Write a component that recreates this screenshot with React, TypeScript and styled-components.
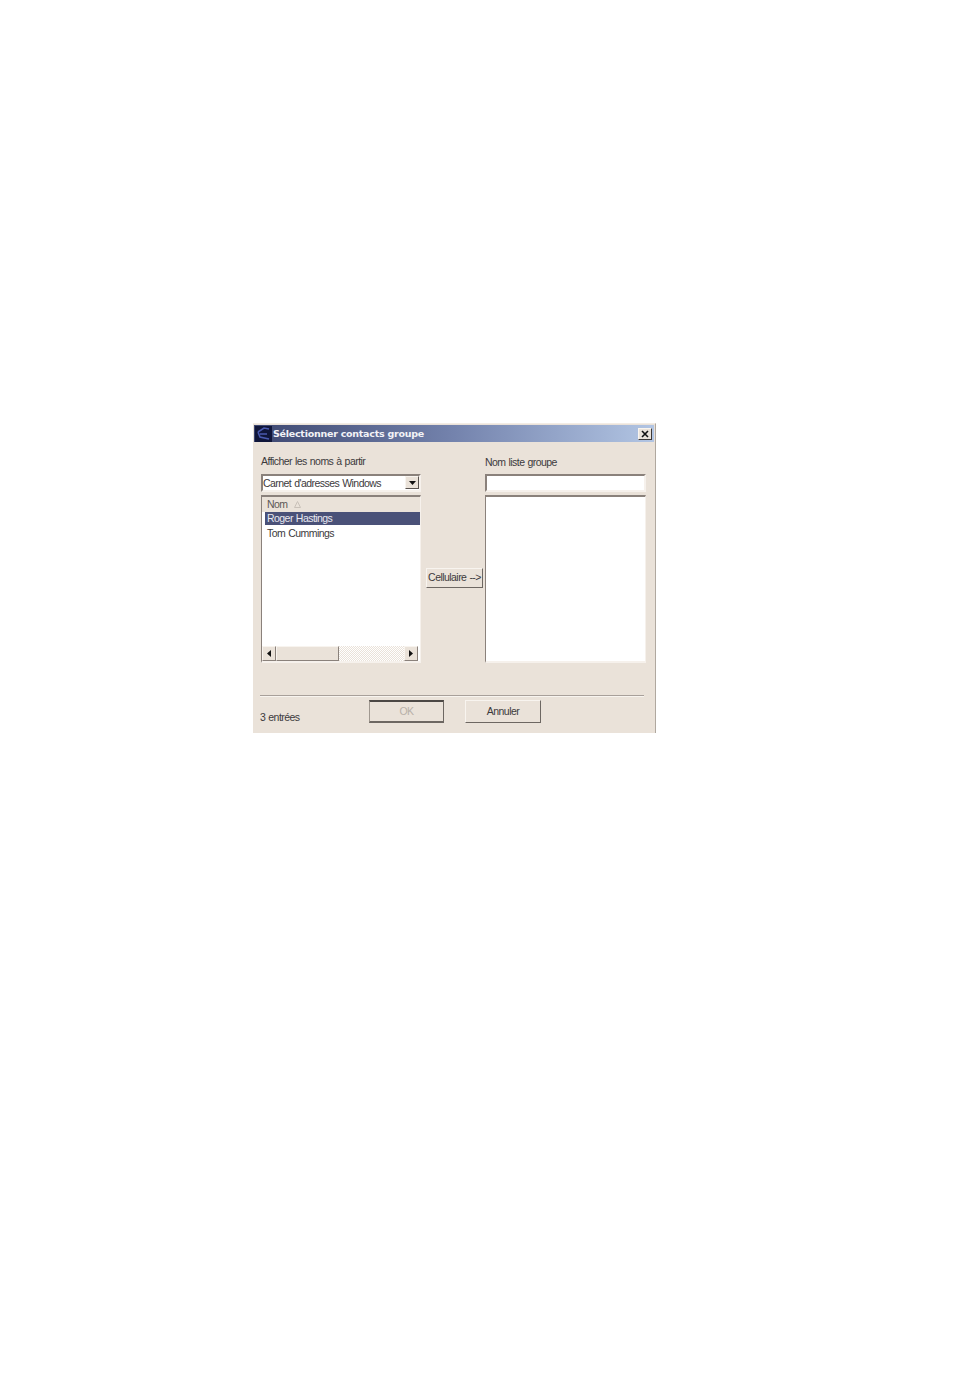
import React from 'react';
import styled, { createGlobalStyle } from 'styled-components';

const GlobalStyle = createGlobalStyle`
  html, body {
    margin: 0;
    background: #ffffff;
  }
`;

const Page = styled.div`
  width: 954px;
  height: 1396px;
  padding: 423px 0 0 253px;
  box-sizing: border-box;
`;

const Dialog = styled.div`
  width: 403px;
  height: 310px;
  box-sizing: border-box;
  background: #eae2d9;
  border-top: 1px solid #f3ece5;
  border-right: 1px solid #b0a89f;
  padding: 1px 1px 0 0;
  font-family: 'Liberation Sans', Arial, sans-serif;
  font-size: 10.5px;
  letter-spacing: -0.55px;
  word-spacing: 0.65px;
  color: #3c3a3c;
`;

const TitleBar = styled.div`
  height: 17px;
  margin: 0 0 1px 1px;
  display: flex;
  align-items: center;
  background: linear-gradient(90deg, #3d4770 0%, #7483ad 50%, #b2c5e3 100%);
`;

const AppIcon = styled.svg`
  width: 17px;
  height: 16px;
  margin-left: 1px;
  flex: none;
`;

const Title = styled.span`
  margin-left: 1px;
  flex: 1;
  color: #f2f2f6;
  font-family: 'DejaVu Sans', Verdana, sans-serif;
  font-size: 9.5px;
  font-weight: 700;
  letter-spacing: -0.25px;
  word-spacing: 0;
  white-space: nowrap;
`;

const CloseButton = styled.div`
  width: 14px;
  height: 12px;
  margin-right: 2px;
  box-sizing: border-box;
  display: flex;
  align-items: center;
  justify-content: center;
  background: #eae2d9;
  border: 1px solid;
  border-color: #f8f4ef #3c3836 #3c3836 #f8f4ef;
`;

const Content = styled.div`
  display: grid;
  grid-template-columns: 160px 64px 161px;
  padding: 0 0 0 8px;
`;

const Column = styled.div`
  display: flex;
  flex-direction: column;
`;

const FieldLabel = styled.div<{ $top: number }>`
  height: 14px;
  line-height: 14px;
  margin-top: ${(p) => p.$top}px;
  margin-bottom: ${(p) => 17 - p.$top}px;
  white-space: nowrap;
`;

const sunken = `
  box-sizing: border-box;
  background: #ffffff;
  border: 2px solid;
  border-color: #8a817b #f6f1ec #f6f1ec #8a817b;
`;

const Select = styled.div`
  ${sunken}
  height: 18px;
  display: flex;
  align-items: center;
  justify-content: space-between;
  padding: 0 0 1px;
  white-space: nowrap;
`;

const Arrow = styled.div`
  width: 14px;
  height: 13px;
  box-sizing: border-box;
  display: flex;
  align-items: center;
  justify-content: center;
  background: #eae2d9;
  border: 1px solid;
  border-color: #f8f4ef #59534f #59534f #f8f4ef;
`;

const ListBox = styled.div`
  ${sunken}
  height: 168px;
  margin-top: 3px;
  border-left-width: 1px;
  border-right-width: 1px;
  display: flex;
  flex-direction: column;
`;

const ListHeader = styled.div`
  height: 15px;
  line-height: 15px;
  flex: none;
  background: #eae2d9;
  padding-left: 5px;
  display: flex;
  align-items: center;
  gap: 6px;
  color: #5c5856;
`;

const Rows = styled.div`
  flex: 1;
  padding: 0 0 0 3px;
`;

const Row = styled.div<{ $selected?: boolean }>`
  height: 13px;
  line-height: 13px;
  margin-bottom: 2px;
  padding-left: 2px;
  background: ${(p) => (p.$selected ? '#4a5178' : 'transparent')};
  color: ${(p) => (p.$selected ? '#e8e8f0' : '#3c3a3c')};
`;

const ScrollBar = styled.div`
  height: 15px;
  flex: none;
  margin-right: 2px;
  display: flex;
  background: repeating-conic-gradient(#eae2d9 0% 25%, #ffffff 0% 50%) 0 0 / 2px 2px;
`;

const ScrollButton = styled.div`
  width: 14px;
  box-sizing: border-box;
  display: flex;
  align-items: center;
  justify-content: center;
  background: #eae2d9;
  border: 1px solid;
  border-color: #f8f4ef #8a817b #8a817b #f8f4ef;
`;

const ScrollThumb = styled.div`
  width: 63px;
  background: #eae2d9;
  box-sizing: border-box;
  border: 1px solid;
  border-color: #f8f4ef #8a817b #8a817b #f8f4ef;
`;

const Spring = styled.div`
  flex: 1;
`;

const MiddleColumn = styled.div`
  padding: 125px 0 0 5px;
`;

const Button = styled.div<{ $width: number; $disabled?: boolean }>`
  width: ${(p) => p.$width}px;
  box-sizing: border-box;
  display: flex;
  align-items: center;
  justify-content: center;
  padding-bottom: 2px;
  background: #eae2d9;
  border: 1px solid;
  border-color: #f8f4ef #6d6762 #6d6762 #f8f4ef;
  white-space: nowrap;
  color: ${(p) => (p.$disabled ? '#b8b0a8' : '#3c3a3c')};
  ${(p) => p.$disabled && 'border-width: 2px 1px 2px 1px; border-color: #4c4845 #6d6762 #6d6762 #a09890;'}
`;

const SendButton = styled(Button)`
  height: 20px;
`;

const NameInput = styled.div`
  ${sunken}
  height: 18px;
`;

const Separator = styled.div`
  height: 1px;
  width: 384px;
  margin: 32px 0 0 7px;
  background: #a8a09a;
  box-shadow: 0 1px 0 #f8f4ef;
`;

const Footer = styled.div`
  display: flex;
  align-items: flex-start;
  padding: 4px 0 0 7px;
`;

const Count = styled.div`
  width: 109px;
  margin-top: 10px;
  line-height: 14px;
  white-space: nowrap;
`;

const FooterButton = styled(Button)`
  height: 23px;
  margin-right: 21px;
`;

export default function App() {
  return (
    <Page>
      <GlobalStyle />
      <Dialog>
        <TitleBar>
          <AppIcon viewBox="0 0 17 16">
            <rect width="17" height="16" fill="#10163a" />
            <path d="M3 6 L9 2 L14 3 M3 6 L5 11 L14 13 M5 8 L12 8" fill="none" stroke="#4a5ab0" strokeWidth="1.6" />
          </AppIcon>
          <Title>Sélectionner contacts groupe</Title>
          <CloseButton>
            <svg width="8" height="8" viewBox="0 0 8 8">
              <path d="M1 1 L7 7 M7 1 L1 7" stroke="#111" strokeWidth="1.6" />
            </svg>
          </CloseButton>
        </TitleBar>
        <Content>
          <Column>
            <FieldLabel $top={11}>Afficher les noms à partir</FieldLabel>
            <Select>
              Carnet d'adresses Windows
              <Arrow>
                <svg width="7" height="4" viewBox="0 0 7 4">
                  <path d="M0 0 H7 L3.5 4 Z" fill="#111" />
                </svg>
              </Arrow>
            </Select>
            <ListBox>
              <ListHeader>
                Nom
                <svg width="7" height="7" viewBox="0 0 7 7">
                  <path d="M3.5 0.5 L0.5 6.5 H6.5 Z" fill="none" stroke="#c8c0b8" />
                </svg>
              </ListHeader>
              <Rows>
                <Row $selected>Roger Hastings</Row>
                <Row>Tom Cummings</Row>
              </Rows>
              <ScrollBar>
                <ScrollButton>
                  <svg width="4" height="7" viewBox="0 0 4 7">
                    <path d="M4 0 V7 L0 3.5 Z" fill="#111" />
                  </svg>
                </ScrollButton>
                <ScrollThumb />
                <Spring />
                <ScrollButton>
                  <svg width="4" height="7" viewBox="0 0 4 7">
                    <path d="M0 0 V7 L4 3.5 Z" fill="#111" />
                  </svg>
                </ScrollButton>
              </ScrollBar>
            </ListBox>
          </Column>
          <MiddleColumn>
            <SendButton $width={57}>Cellulaire --&gt;</SendButton>
          </MiddleColumn>
          <Column>
            <FieldLabel $top={12}>Nom liste groupe</FieldLabel>
            <NameInput />
            <ListBox />
          </Column>
        </Content>
        <Separator />
        <Footer>
          <Count>3 entrées</Count>
          <FooterButton $width={75} $disabled>
            OK
          </FooterButton>
          <FooterButton $width={76}>Annuler</FooterButton>
        </Footer>
      </Dialog>
    </Page>
  );
}
